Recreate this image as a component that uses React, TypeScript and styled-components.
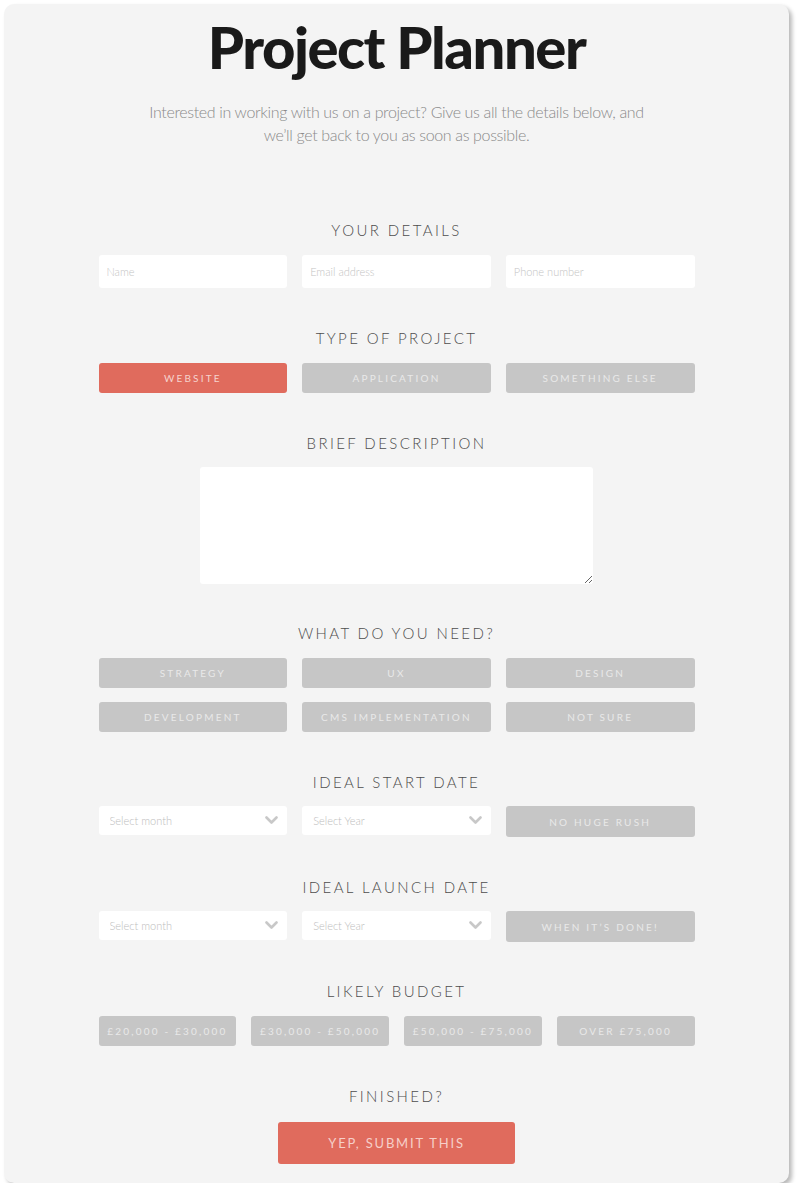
import React from 'react';
import styled, { createGlobalStyle } from 'styled-components';

const GlobalStyle = createGlobalStyle`
  html, body {
    margin: 0;
    padding: 0;
    background: #ffffff;
  }
  body {
    font-family: 'Lato', 'Open Sans', sans-serif;
    -webkit-font-smoothing: antialiased;
  }
  * {
    box-sizing: border-box;
  }
`;

const Card = styled.div`
  width: 785px;
  height: 1179px;
  margin: 4px 0 0 4px;
  background-color: #f4f4f4;
  border-radius: 10px;
  box-shadow: 3px 3px 4px rgba(0, 0, 0, 0.28);
  padding-top: 10px;
`;

const Title = styled.h1`
  margin: 0;
  font-family: 'Lato', sans-serif;
  font-weight: 900;
  font-size: 58px;
  line-height: 66px;
  letter-spacing: -1.5px;
  text-align: center;
  color: #1a1a1a;
`;

const Intro = styled.p`
  width: 500px;
  margin: 20px auto 0;
  font-family: 'Lato', sans-serif;
  font-weight: 300;
  font-size: 16px;
  line-height: 23px;
  letter-spacing: -0.35px;
  text-align: center;
  color: #8a8a8a;
`;

const Form = styled.form`
  width: 596px;
  margin: 74px auto 0;
  display: flex;
  flex-direction: column;
  gap: 40px;
`;

const Section = styled.section<{ $pull?: number }>`
  margin-top: ${p => -(p.$pull ?? 0)}px;
`;

const Heading = styled.h2<{ $mb?: number }>`
  margin: 0 0 ${p => p.$mb ?? 15}px;
  font-family: 'Lato', sans-serif;
  font-weight: 300;
  font-size: 15px;
  line-height: 20px;
  letter-spacing: 2.4px;
  text-transform: uppercase;
  text-align: center;
  color: #4d4d4d;
`;

const Grid = styled.div<{ $cols: number }>`
  display: grid;
  grid-template-columns: repeat(${p => p.$cols}, 1fr);
  align-items: start;
  column-gap: 15px;
  row-gap: 14px;
`;

const TextInput = styled.input`
  height: 33px;
  width: 100%;
  border: none;
  border-radius: 3px;
  background: #ffffff;
  padding: 0 8px;
  font-family: 'Lato', sans-serif;
  font-weight: 300;
  font-size: 11px;
  color: #555;
  outline: none;

  &::placeholder {
    color: #c4c4c4;
  }
`;

const Choice = styled.button<{ $active?: boolean; $tall?: boolean }>`
  height: ${p => (p.$tall ? 31 : 30)}px;
  border: none;
  border-radius: 3px;
  background-color: ${p => (p.$active ? '#e06b5d' : '#c6c6c6')};
  color: ${p => (p.$active ? '#f6d3ce' : '#e9e9e9')};
  font-family: 'Lato', sans-serif;
  font-weight: 400;
  font-size: 10px;
  letter-spacing: 2.2px;
  text-transform: uppercase;
  white-space: nowrap;
  padding: 0;
  cursor: pointer;
`;

const TextArea = styled.textarea`
  display: block;
  width: 393px;
  height: 117px;
  margin: -1px auto -1px;
  border: none;
  border-radius: 3px;
  background: #ffffff;
  outline: none;
  padding: 8px;
  font-family: 'Lato', sans-serif;
  font-size: 12px;
`;

const SelectWrap = styled.div`
  position: relative;
  height: 29px;
`;

const Select = styled.select`
  appearance: none;
  -webkit-appearance: none;
  width: 100%;
  height: 100%;
  border: none;
  border-radius: 3px;
  background: #ffffff;
  padding: 0 30px 0 11px;
  font-family: 'Lato', sans-serif;
  font-weight: 300;
  font-size: 11px;
  color: #bdbdbd;
  outline: none;
`;

const Chevron = styled.svg`
  position: absolute;
  right: 9px;
  top: 10px;
  pointer-events: none;
`;

const SubmitRow = styled.div`
  display: flex;
  justify-content: center;
  margin-top: 16px;
`;

const Submit = styled.button`
  width: 237px;
  height: 42px;
  border: none;
  border-radius: 3px;
  background-color: #e06b5d;
  color: #f6cfc9;
  font-family: 'Lato', sans-serif;
  font-weight: 400;
  font-size: 13px;
  letter-spacing: 1.8px;
  text-transform: uppercase;
  cursor: pointer;
`;

const DateSelect: React.FC<{ label: string }> = ({ label }) => (
  <SelectWrap>
    <Select defaultValue="">
      <option value="" disabled>
        {label}
      </option>
    </Select>
    <Chevron width="13" height="9" viewBox="0 0 13 9">
      <path d="M1.5 1.5 L6.5 6.5 L11.5 1.5" fill="none" stroke="#c8c8c8" strokeWidth="2.6" strokeLinecap="round" strokeLinejoin="round" />
    </Chevron>
  </SelectWrap>
);

const needs = ['Strategy', 'UX', 'Design', 'Development', 'CMS Implementation', 'Not sure'];
const budgets = ['£20,000 - £30,000', '£30,000 - £50,000', '£50,000 - £75,000', 'Over £75,000'];

const App: React.FC = () => {
  return (
    <>
      <GlobalStyle />
      <Card>
        <Title>Project Planner</Title>
        <Intro>
          Interested in working with us on a project? Give us all the details below, and we’ll get back to you as soon as possible.
        </Intro>

        <Form onSubmit={e => e.preventDefault()}>
          <Section>
            <Heading>Your details</Heading>
            <Grid $cols={3}>
              <TextInput placeholder="Name" />
              <TextInput placeholder="Email address" />
              <TextInput placeholder="Phone number" />
            </Grid>
          </Section>

          <Section>
            <Heading>Type of project</Heading>
            <Grid $cols={3}>
              <Choice type="button" $active>Website</Choice>
              <Choice type="button">Application</Choice>
              <Choice type="button">Something else</Choice>
            </Grid>
          </Section>

          <Section>
            <Heading>Brief description</Heading>
            <TextArea />
          </Section>

          <Section>
            <Heading>What do you need?</Heading>
            <Grid $cols={3}>
              {needs.map(n => (
                <Choice type="button" key={n}>{n}</Choice>
              ))}
            </Grid>
          </Section>

          <Section>
            <Heading $mb={14}>Ideal start date</Heading>
            <Grid $cols={3}>
              <DateSelect label="Select month" />
              <DateSelect label="Select Year" />
              <Choice type="button" $tall>No huge rush</Choice>
            </Grid>
          </Section>

          <Section>
            <Heading $mb={14}>Ideal launch date</Heading>
            <Grid $cols={3}>
              <DateSelect label="Select month" />
              <DateSelect label="Select Year" />
              <Choice type="button" $tall>When it’s done!</Choice>
            </Grid>
          </Section>

          <Section $pull={1}>
            <Heading>Likely budget</Heading>
            <Grid $cols={4}>
              {budgets.map(b => (
                <Choice type="button" key={b}>{b}</Choice>
              ))}
            </Grid>
          </Section>

          <Section>
            <Heading>Finished?</Heading>
            <SubmitRow>
              <Submit type="submit">Yep, submit this</Submit>
            </SubmitRow>
          </Section>
        </Form>
      </Card>
    </>
  );
};

export default App;
